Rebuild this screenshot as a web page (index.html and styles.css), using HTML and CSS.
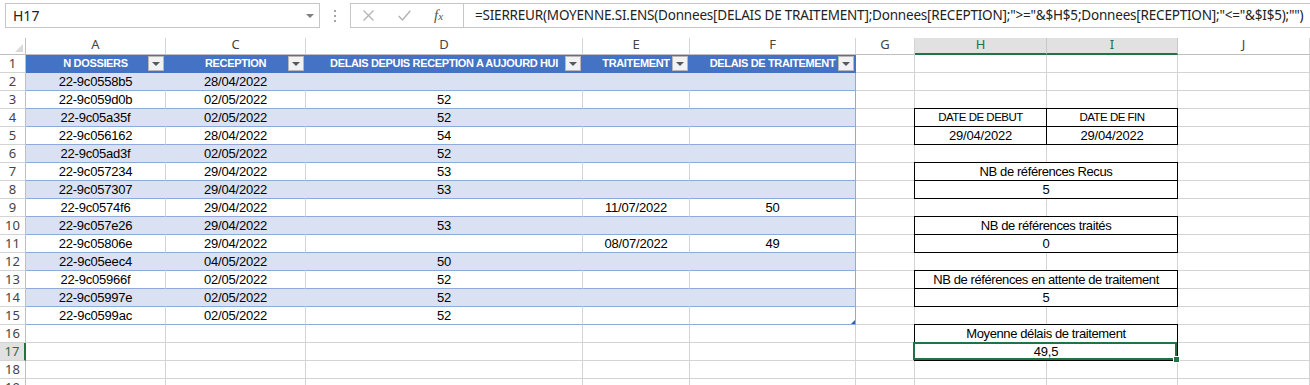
FILE: index.html
```html
<!DOCTYPE html>
<html lang="fr">
<head>
  <meta charset="UTF-8">
  <title>Suivi des dossiers</title>
  <link rel="stylesheet" href="styles.css">
</head>
<body>
  <div class="topbar">
    <div class="namebox">
      <span>H17</span>
      <svg width="8" height="4" viewBox="0 0 8 4"><polygon points="0,0 8,0 4,4" fill="#7f7f7f"/></svg>
    </div>
    <div class="dots">
      <svg width="2" height="12" viewBox="0 0 2 12"><rect x="0" y="0" width="2" height="2" fill="#a6a6a6"/><rect x="0" y="5" width="2" height="2" fill="#a6a6a6"/><rect x="0" y="10" width="2" height="2" fill="#a6a6a6"/></svg>
    </div>
    <div class="fbar">
      <div class="fbtns">
        <svg class="ico-x" width="11" height="11" viewBox="0 0 11 11"><path d="M0.5 0.5 L10.5 10.5 M10.5 0.5 L0.5 10.5" stroke="#b3b3b3" stroke-width="1.3" fill="none"/></svg>
        <svg class="ico-ok" width="13" height="11" viewBox="0 0 13 11"><path d="M0.7 6 L4.5 10 L12.3 0.7" stroke="#b3b3b3" stroke-width="1.4" fill="none"/></svg>
        <span class="fx"><i>f</i><i class="fx-x">x</i></span>
      </div>
      <div class="formula">=SIERREUR(MOYENNE.SI.ENS(Donnees[DELAIS DE TRAITEMENT];Donnees[RECEPTION];"&gt;="&amp;$H$5;Donnees[RECEPTION];"&lt;="&amp;$I$5);"")</div>
    </div>
  </div>

  <div class="sheet">
    <div class="r">
      <div class="c corner"></div>
      <div class="c ch">A</div><div class="c ch">C</div><div class="c ch">D</div><div class="c ch">E</div><div class="c ch">F</div>
      <div class="c ch">G</div><div class="c ch on">H</div><div class="c ch on">I</div><div class="c ch">J</div>
    </div>

    <div class="r">
      <div class="c rh">1</div>
      <div class="c th">N DOSSIERS<i class="dd"></i></div>
      <div class="c th">RECEPTION<i class="dd"></i></div>
      <div class="c th">DELAIS DEPUIS RECEPTION A AUJOURD HUI<i class="dd"></i></div>
      <div class="c th">TRAITEMENT<i class="dd"></i></div>
      <div class="c th last">DELAIS DE TRAITEMENT<i class="dd"></i></div>
      <div class="c"></div><div class="c"></div><div class="c"></div><div class="c"></div>
    </div>

    <div class="r band">
      <div class="c rh">2</div>
      <div class="c t">22-9c0558b5</div><div class="c t">28/04/2022</div><div class="c t"></div><div class="c t"></div><div class="c t last"></div>
      <div class="c"></div><div class="c"></div><div class="c"></div><div class="c"></div>
    </div>

    <div class="r">
      <div class="c rh">3</div>
      <div class="c t">22-9c059d0b</div><div class="c t">02/05/2022</div><div class="c t">52</div><div class="c t"></div><div class="c t last"></div>
      <div class="c"></div><div class="c"></div><div class="c"></div><div class="c"></div>
    </div>

    <div class="r band">
      <div class="c rh">4</div>
      <div class="c t">22-9c05a35f</div><div class="c t">02/05/2022</div><div class="c t">52</div><div class="c t"></div><div class="c t last"></div>
      <div class="c"></div><div class="c bx caps">DATE DE DEBUT</div><div class="c bx caps">DATE DE FIN</div><div class="c"></div>
    </div>

    <div class="r">
      <div class="c rh">5</div>
      <div class="c t">22-9c056162</div><div class="c t">28/04/2022</div><div class="c t">54</div><div class="c t"></div><div class="c t last"></div>
      <div class="c"></div><div class="c bx">29/04/2022</div><div class="c bx">29/04/2022</div><div class="c"></div>
    </div>

    <div class="r band">
      <div class="c rh">6</div>
      <div class="c t">22-9c05ad3f</div><div class="c t">02/05/2022</div><div class="c t">52</div><div class="c t"></div><div class="c t last"></div>
      <div class="c"></div><div class="c"></div><div class="c"></div><div class="c"></div>
    </div>

    <div class="r">
      <div class="c rh">7</div>
      <div class="c t">22-9c057234</div><div class="c t">29/04/2022</div><div class="c t">53</div><div class="c t"></div><div class="c t last"></div>
      <div class="c"></div><div class="c bx m lbl">NB de références Recus</div><div class="c"></div>
    </div>

    <div class="r band">
      <div class="c rh">8</div>
      <div class="c t">22-9c057307</div><div class="c t">29/04/2022</div><div class="c t">53</div><div class="c t"></div><div class="c t last"></div>
      <div class="c"></div><div class="c bx m">5</div><div class="c"></div>
    </div>

    <div class="r">
      <div class="c rh">9</div>
      <div class="c t">22-9c0574f6</div><div class="c t">29/04/2022</div><div class="c t"></div><div class="c t">11/07/2022</div><div class="c t last">50</div>
      <div class="c"></div><div class="c"></div><div class="c"></div><div class="c"></div>
    </div>

    <div class="r band">
      <div class="c rh">10</div>
      <div class="c t">22-9c057e26</div><div class="c t">29/04/2022</div><div class="c t">53</div><div class="c t"></div><div class="c t last"></div>
      <div class="c"></div><div class="c bx m lbl">NB de références traités</div><div class="c"></div>
    </div>

    <div class="r">
      <div class="c rh">11</div>
      <div class="c t">22-9c05806e</div><div class="c t">29/04/2022</div><div class="c t"></div><div class="c t">08/07/2022</div><div class="c t last">49</div>
      <div class="c"></div><div class="c bx m">0</div><div class="c"></div>
    </div>

    <div class="r band">
      <div class="c rh">12</div>
      <div class="c t">22-9c05eec4</div><div class="c t">04/05/2022</div><div class="c t">50</div><div class="c t"></div><div class="c t last"></div>
      <div class="c"></div><div class="c"></div><div class="c"></div><div class="c"></div>
    </div>

    <div class="r">
      <div class="c rh">13</div>
      <div class="c t">22-9c05966f</div><div class="c t">02/05/2022</div><div class="c t">52</div><div class="c t"></div><div class="c t last"></div>
      <div class="c"></div><div class="c bx m lbl">NB de références en attente de traitement</div><div class="c"></div>
    </div>

    <div class="r band">
      <div class="c rh">14</div>
      <div class="c t">22-9c05997e</div><div class="c t">02/05/2022</div><div class="c t">52</div><div class="c t"></div><div class="c t last"></div>
      <div class="c"></div><div class="c bx m">5</div><div class="c"></div>
    </div>

    <div class="r">
      <div class="c rh">15</div>
      <div class="c t">22-9c0599ac</div><div class="c t">02/05/2022</div><div class="c t">52</div><div class="c t"></div><div class="c t last"><i class="resize"></i></div>
      <div class="c"></div><div class="c"></div><div class="c"></div><div class="c"></div>
    </div>

    <div class="r">
      <div class="c rh">16</div>
      <div class="c"></div><div class="c"></div><div class="c"></div><div class="c"></div><div class="c"></div>
      <div class="c"></div><div class="c bx m lbl">Moyenne délais de traitement</div><div class="c"></div>
    </div>

    <div class="r">
      <div class="c rh on">17</div>
      <div class="c"></div><div class="c"></div><div class="c"></div><div class="c"></div><div class="c"></div>
      <div class="c"></div><div class="c bx m sel">49,5<i class="fill"></i></div><div class="c"></div>
    </div>

    <div class="r">
      <div class="c rh">18</div>
      <div class="c"></div><div class="c"></div><div class="c"></div><div class="c"></div><div class="c"></div>
      <div class="c"></div><div class="c"></div><div class="c"></div><div class="c"></div>
    </div>

    <div class="r">
      <div class="c rh">19</div>
      <div class="c"></div><div class="c"></div><div class="c"></div><div class="c"></div><div class="c"></div>
      <div class="c"></div><div class="c"></div><div class="c"></div><div class="c"></div>
    </div>
  </div>
</body>
</html>
```

FILE: styles.css
```css
body {
  margin: 0;
  width: 1310px;
  height: 385px;
  overflow: hidden;
  background: #fff;
  font-family: "Liberation Sans", Arial, sans-serif;
}

/* formula bar */
.topbar {
  height: 38px;
  box-sizing: border-box;
  padding-top: 3px;
  display: flex;
  align-items: flex-start;
  font-family: "Noto Sans", sans-serif;
}
.namebox {
  flex-shrink: 0;
  margin-left: 5px;
  width: 315px;
  height: 25px;
  box-sizing: border-box;
  border: 1px solid #c6c6c6;
  display: flex;
  align-items: center;
  justify-content: space-between;
  padding: 0 5px 0 7px;
  font-size: 14px;
  color: #222;
}
.dots {
  flex-shrink: 0;
  width: 30px;
  height: 25px;
  display: flex;
  align-items: center;
  justify-content: center;
}
.fbar {
  flex: 1;
  min-width: 0;
  overflow: hidden;
  height: 25px;
  box-sizing: border-box;
  border: 1px solid #c6c6c6;
  border-right: none;
  display: flex;
}
.fbtns {
  flex-shrink: 0;
  width: 113px;
  box-sizing: border-box;
  border-right: 1px solid #c6c6c6;
  display: flex;
  align-items: center;
  padding-left: 12px;
}
.ico-ok {
  margin-left: 24px;
}
.fx {
  margin-left: 23px;
  font-family: "Liberation Serif", serif;
  font-size: 15px;
  color: #555;
}
.fx-x {
  font-size: 11px;
}
.formula {
  padding-left: 11px;
  font-size: 13.5px;
  letter-spacing: -0.2px;
  line-height: 23px;
  color: #222;
  white-space: nowrap;
}

/* sheet grid */
.sheet {
  display: grid;
  grid-template-columns: 26px 140px 140px 277px 107px 166px 59px 132px 131px 1fr;
  grid-template-rows: 17px;
  grid-auto-rows: 18px;
}
.r {
  display: contents;
}
.c {
  box-sizing: border-box;
  border-right: 1px solid #d4d4d4;
  border-bottom: 1px solid #d4d4d4;
  font-size: 13px;
  line-height: 17px;
  letter-spacing: -0.2px;
  text-align: center;
  white-space: nowrap;
  color: #000;
}

.corner {
  position: relative;
  border-right-color: #bfbfbf;
  border-bottom-color: #bfbfbf;
}
.corner::after {
  content: "";
  position: absolute;
  right: 2px;
  bottom: 2px;
  border-left: 8px solid transparent;
  border-bottom: 8px solid #d9d9d9;
}
.ch {
  font-family: "Noto Sans", sans-serif;
  font-size: 13px;
  line-height: 12px;
  letter-spacing: 0;
  color: #444;
  border-bottom-color: #bfbfbf;
}
.ch.on {
  background: #e1e1e1;
  color: #217346;
  border-right-color: #c8c8c8;
  border-bottom: 2px solid #217346;
}
.rh {
  font-family: "Noto Sans", sans-serif;
  font-size: 13px;
  letter-spacing: 0;
  color: #444;
  border-right-color: #bfbfbf;
}
.rh.on {
  background: #e1e1e1;
  color: #217346;
  border-right: 2px solid #217346;
}

/* table */
.th {
  position: relative;
  background: #4472c4;
  color: #fff;
  font-weight: bold;
  font-size: 11px;
  letter-spacing: -0.35px;
  border-right-color: #4472c4;
  border-bottom-color: #4472c4;
}
.dd {
  position: absolute;
  right: 1px;
  top: 1px;
  width: 16px;
  height: 15px;
  box-sizing: border-box;
  background: #f2f2f2;
  border: 1px solid #b7b7b7;
  display: flex;
  align-items: center;
  justify-content: center;
}
.dd::after {
  content: "";
  border-left: 4px solid transparent;
  border-right: 4px solid transparent;
  border-top: 4px solid #595959;
}
.t {
  position: relative;
  border-bottom-color: #8ea9db;
}
.band .t {
  background: #d9e1f2;
  border-right-color: #d9e1f2;
}
.t.last,
.band .t.last {
  border-right-color: #8ea9db;
}
.resize {
  position: absolute;
  right: 0;
  bottom: 0;
  border-left: 4px solid transparent;
  border-bottom: 4px solid #3c5ba9;
}

/* summary boxes */
.bx {
  border-right-color: #000;
  border-bottom-color: #000;
  box-shadow: 0 -1px 0 #000, -1px 0 0 #000, -1px -1px 0 #000;
}
.m {
  grid-column: span 2;
}
.caps {
  font-size: 11.5px;
  letter-spacing: -0.5px;
}
.lbl {
  letter-spacing: -0.4px;
}
.sel {
  position: relative;
}
.sel::before {
  content: "";
  position: absolute;
  left: -2px;
  top: -1px;
  right: 0;
  bottom: 0;
  border: 2px solid #217346;
}
.fill {
  position: absolute;
  right: -3px;
  bottom: -3px;
  width: 5px;
  height: 5px;
  background: #217346;
  border: 1px solid #fff;
}
```
